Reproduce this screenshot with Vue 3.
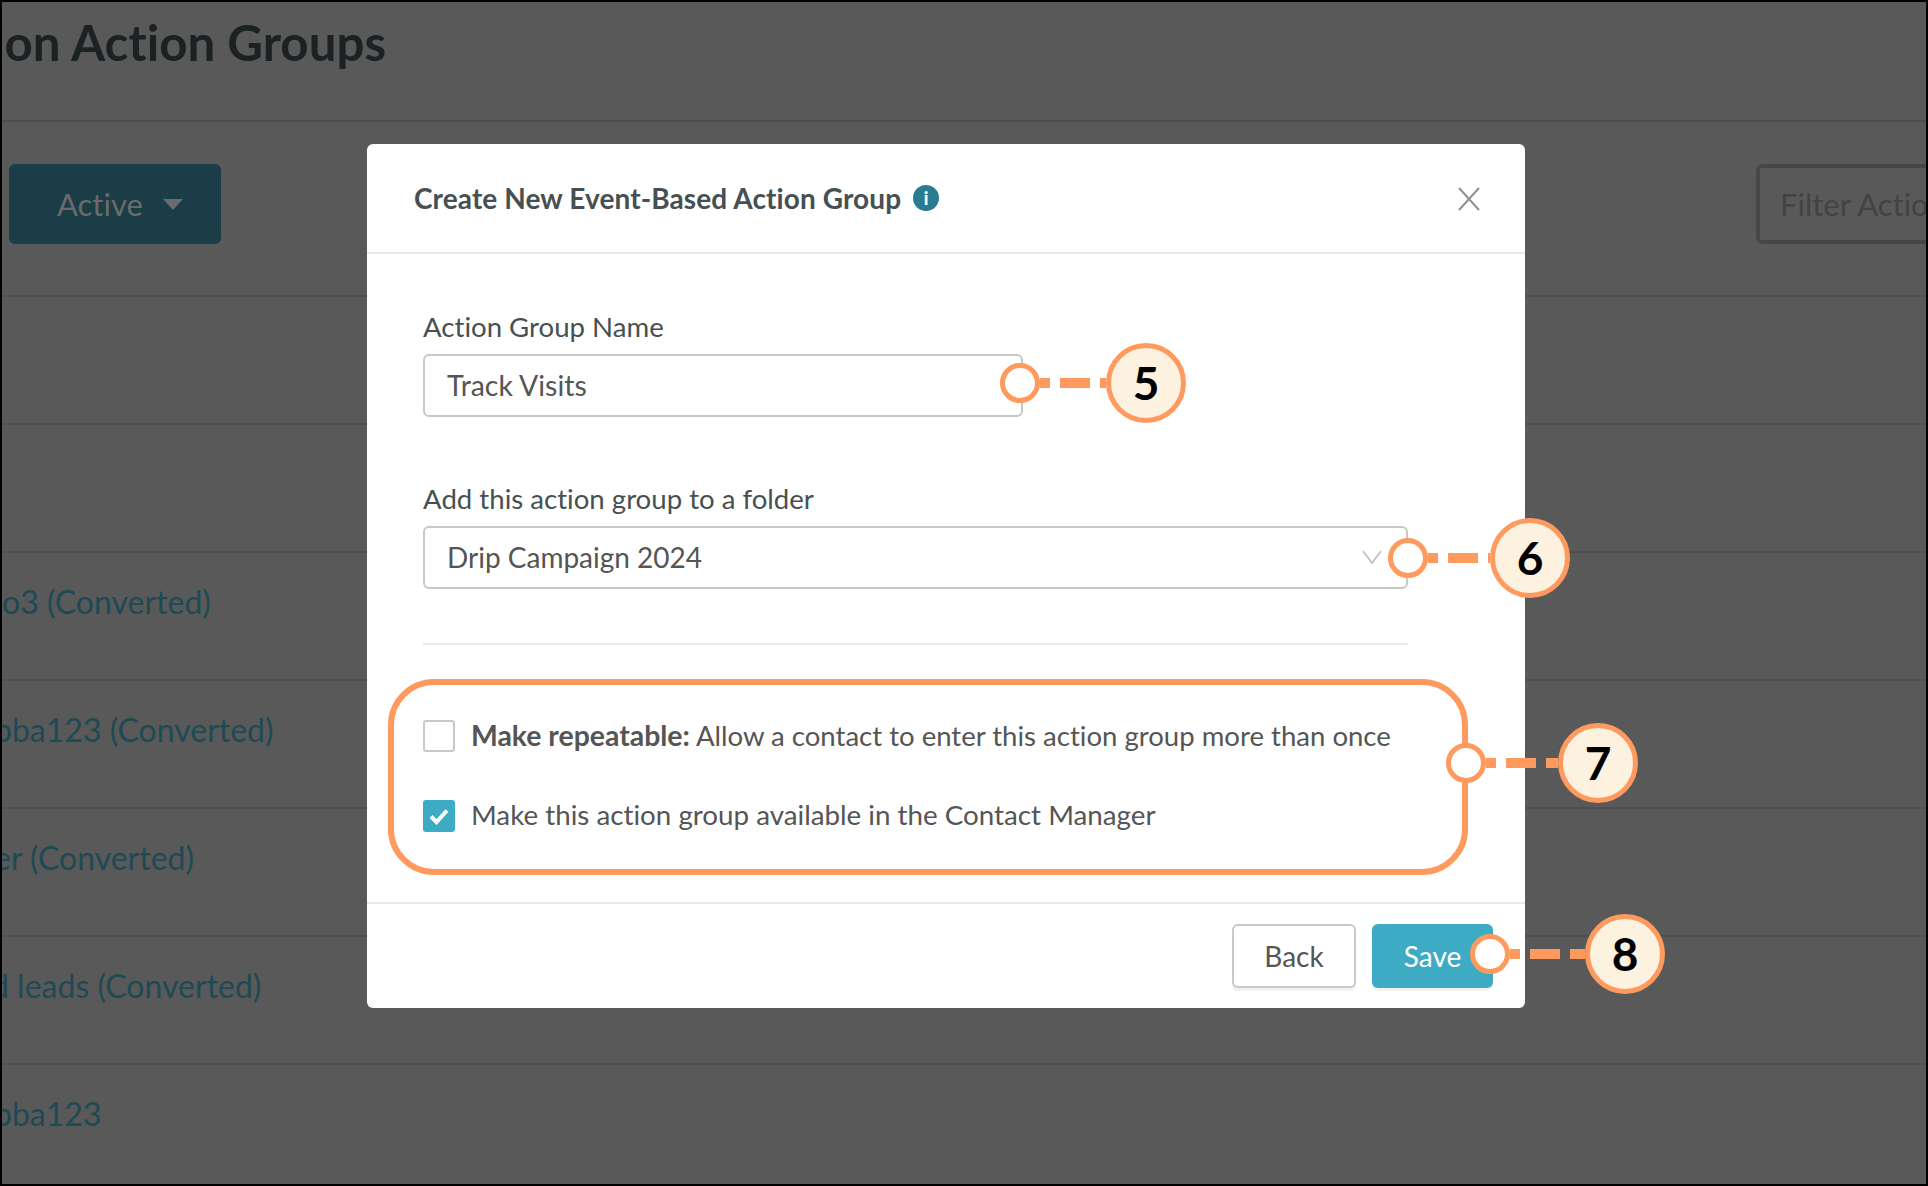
<script setup>
const rows = [
  { text: '', h: 128 },
  { text: '', h: 128 },
  { text: 'o3 (Converted)', x: 0, h: 128 },
  { text: 'pba123 (Converted)', x: -8, h: 128 },
  { text: 'er (Converted)', x: -8, h: 128 },
  { text: 'd leads (Converted)', x: -11, h: 128 },
  { text: 'pba123', x: -8, h: 118 },
]
const callouts = [
  { n: 5, x: 998, y: 381, gaps: [10, 30, 6], w: 186 },
  { n: 6, x: 1386, y: 556, gaps: [10, 30, 2], w: 182 },
  { n: 7, x: 1444, y: 761, gaps: [10, 30, 12], w: 192 },
  { n: 8, x: 1468, y: 952, gaps: [10, 30, 15], w: 195 },
]
</script>

<template>
  <div class="frame">
    <div class="page">
      <header class="page-head"><h1>ion Action Groups</h1></header>
      <div class="toolbar">
        <button class="active-btn">Active <i class="caret"></i></button>
        <div class="filter">Filter Actions</div>
      </div>
      <div v-for="(r, i) in rows" :key="i" class="row" :style="{ height: r.h + 'px' }">
        <span :style="{ marginLeft: (r.x || 0) + 'px' }">{{ r.text }}</span>
      </div>
    </div>

    <section class="modal">
      <div class="modal-head">
        <h2>Create New Event-Based Action Group</h2>
        <span class="info">i</span>
        <svg class="close" width="22" height="24" viewBox="0 0 22 24"><path d="M1 1 21 23M21 1 1 23" stroke="#8f8f8f" stroke-width="2" fill="none"/></svg>
      </div>
      <div class="modal-body">
        <label class="field-label">Action Group Name</label>
        <div class="input name">Track Visits</div>
        <label class="field-label second">Add this action group to a folder</label>
        <div class="input folder">
          Drip Campaign 2024
          <svg class="chev" width="20" height="14" viewBox="0 0 20 14"><path d="M1 1 10 13 19 1" stroke="#bdbdbd" stroke-width="1.6" fill="none"/></svg>
        </div>
        <hr class="rule" />
        <div class="options">
          <div class="option">
            <span class="check"></span>
            <span class="opt-text first"><b>Make repeatable:</b> Allow a contact to enter this action group more than once</span>
          </div>
          <div class="option">
            <span class="check on">
              <svg width="22" height="18" viewBox="0 0 22 18"><path d="M3 9.5 8.5 15 19 3.5" stroke="#fff" stroke-width="4" fill="none"/></svg>
            </span>
            <span class="opt-text">Make this action group available in the Contact Manager</span>
          </div>
        </div>
      </div>
      <div class="modal-foot">
        <button class="btn back">Back</button>
        <button class="btn save">Save</button>
      </div>
    </section>

    <div
      v-for="c in callouts"
      :key="c.n"
      class="callout"
      :style="{ left: c.x + 'px', top: c.y - 40 + 'px', width: c.w + 'px' }"
    >
      <span class="ring"></span>
      <span class="dash" :style="{ width: c.gaps[0] + 'px' }"></span>
      <span class="gap"></span>
      <span class="dash" :style="{ width: c.gaps[1] + 'px' }"></span>
      <span class="gap"></span>
      <span class="dash" :style="{ width: c.gaps[2] + 'px' }"></span>
      <span class="badge">{{ c.n }}</span>
    </div>
  </div>
</template>

<style>
html, body { margin: 0; background: #000; }
</style>

<style scoped>
.frame {
  position: relative;
  width: 1928px;
  height: 1186px;
  box-sizing: border-box;
  border: 2px solid #000;
  overflow: hidden;
  background: #595959;
  font-family: Lato, "Open Sans", sans-serif;
  font-variant-ligatures: none;
}
.page-head {
  height: 118px;
  border-bottom: 2px solid #4f4f4f;
  overflow: hidden;
}
.page-head h1 {
  margin: 11px 0 0 -10px;
  font-size: 49.3px;
  line-height: 58px;
  font-weight: 700;
  color: #1c2123;
}
.toolbar {
  height: 173px;
  border-bottom: 2px solid #4f4f4f;
  display: flex;
  align-items: flex-start;
  justify-content: space-between;
  padding-left: 7px;
}
.active-btn {
  width: 212px;
  height: 80px;
  margin-top: 42px;
  padding: 0 0 0 48px;
  border: 0;
  border-radius: 6px;
  background: #1a3d47;
  color: #6b6b6b;
  font: 400 31px Lato, sans-serif;
  font-variant-ligatures: none;
  display: flex;
  align-items: center;
  gap: 20px;
}
.caret {
  width: 0;
  height: 0;
  border: 10px solid transparent;
  border-top: 11px solid #6b6b6b;
  border-bottom: 0;
}
.filter {
  width: 300px;
  height: 80px;
  box-sizing: border-box;
  border: 4px solid #474747;
  border-radius: 6px;
  margin-right: -130px;
  margin-top: 42px;
  padding-left: 20px;
  font-size: 31px;
  line-height: 72px;
  color: #434343;
  white-space: nowrap;
  overflow: hidden;
}
.row {
  box-sizing: border-box;
  border-bottom: 2px solid #4f4f4f;
  padding-top: 29px;
  font-size: 32px;
  line-height: 40px;
  color: #1d4a55;
  white-space: nowrap;
}
.row:last-child { border-bottom: 0; }
.row span { display: block; }

.modal {
  position: absolute;
  left: 365px;
  top: 142px;
  width: 1158px;
  height: 864px;
  background: #fff;
  border-radius: 6px;
  display: flex;
  flex-direction: column;
}
.modal-head {
  height: 110px;
  flex: none;
  box-sizing: border-box;
  border-bottom: 2px solid #e8e8e8;
  display: flex;
  align-items: center;
  padding: 0 45px 0 47px;
  gap: 12px;
}
.modal-head h2 {
  margin: 0;
  font-size: 28px;
  letter-spacing: 0.1px;
  font-weight: 700;
  color: #465052;
}
.info {
  width: 26px;
  height: 26px;
  border-radius: 50%;
  background: #2a7a91;
  color: #fff;
  font: 900 18px/26px Lato, sans-serif;
  text-align: center;
}
.close { margin-left: auto; margin-top: 2px; }
.modal-body {
  flex: 1;
  padding: 55px 0 0 56px;
  display: flex;
  flex-direction: column;
  align-items: flex-start;
}
.field-label {
  font-size: 27.6px;
  line-height: 36px;
  color: #465052;
}
.second { margin-top: 64px; }
.input {
  box-sizing: border-box;
  height: 63px;
  border: 2px solid #c8c8c8;
  border-radius: 6px;
  margin-top: 9px;
  padding-left: 22px;
  font-size: 28px;
  line-height: 59px;
  color: #555;
  position: relative;
}
.name { width: 600px; font-size: 28.4px; }
.folder { width: 985px; }
.chev { position: absolute; right: 24px; top: 22px; }
.rule {
  width: 985px;
  height: 2px;
  margin: 54px 0 0;
  border: 0;
  background: #e8e8e8;
}
.options {
  box-sizing: border-box;
  width: 1080px;
  height: 196px;
  margin: 34px 0 0 -35px;
  border: 6px solid #ff9a5e;
  border-radius: 46px;
  padding: 35px 0 0 29px;
  display: flex;
  flex-direction: column;
  gap: 48px;
}
.option {
  display: flex;
  align-items: center;
  gap: 16px;
  height: 32px;
  font-size: 27.75px;
  color: #555;
  white-space: nowrap;
}
.opt-text { padding-bottom: 3px; }
.opt-text.first { font-size: 27.55px; }
.opt-text b { font-size: 28.4px; }
.check {
  box-sizing: border-box;
  width: 32px;
  height: 32px;
  border: 2px solid #c8c8c8;
  border-radius: 3px;
  display: flex;
  align-items: center;
  justify-content: center;
}
.check.on { background: #3eabc4; border-color: #3eabc4; }
.modal-foot {
  height: 106px;
  flex: none;
  box-sizing: border-box;
  border-top: 2px solid #e8e8e8;
  display: flex;
  justify-content: flex-end;
  gap: 16px;
  padding: 20px 32px 0 0;
}
.btn {
  height: 64px;
  border-radius: 6px;
  font: 400 28px Lato, sans-serif;
  box-shadow: 0 3px 0 #f2f2f2;
}
.back { width: 124px; background: #fff; border: 2px solid #c8c8c8; color: #555; }
.save { width: 121px; background: #3eabc4; border: 0; color: #fff; }

.callout {
  position: absolute;
  height: 80px;
  display: flex;
  align-items: center;
}
.ring {
  flex: none;
  box-sizing: border-box;
  width: 40px;
  height: 40px;
  border: 5px solid #ff9a5e;
  border-radius: 50%;
  background: #fff;
}
.dash { flex: none; height: 10px; background: #ff9a5e; }
.gap { flex: none; width: 10px; }
.badge {
  flex: none;
  box-sizing: border-box;
  width: 80px;
  height: 80px;
  margin-left: auto;
  border: 5px solid #ff9a5e;
  border-radius: 50%;
  background: #fdf1e0;
  color: #000;
  font: 700 46px/70px Lato, sans-serif;
  text-align: center;
}
</style>
